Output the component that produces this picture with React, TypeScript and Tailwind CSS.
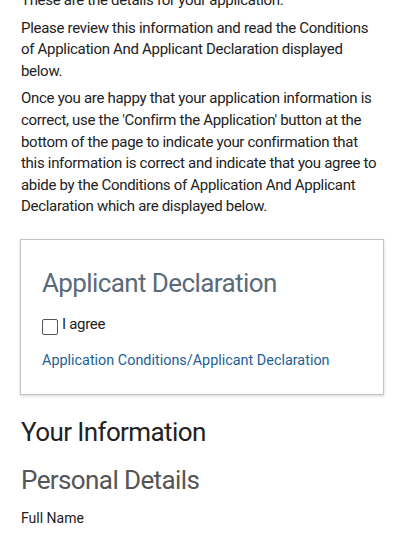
import React from "react";

export default function App() {
  return (
    <div
      className="min-h-[555px] w-[401px] overflow-hidden bg-white text-[#222222]"
      style={{ fontFamily: "Roboto, 'Liberation Sans', sans-serif" }}
    >
      <div className="mt-[-10px] px-[21px]">
        <p className="mb-[6px] text-[15px] leading-[21.6px] tracking-[-0.3px]">These are the details for your application.</p>
        <p className="mb-[6px] text-[15px] leading-[21.6px] tracking-[-0.3px]">
          Please review this information and read the Conditions of Application And Applicant Declaration displayed below.
        </p>
        <p className="text-[15px] leading-[21.6px] tracking-[-0.3px]">
          Once you are happy that your application information is correct, use the 'Confirm the Application' button at the bottom of the page to indicate your confirmation that this information is correct and indicate that you agree to abide by the Conditions of Application And Applicant Declaration which are displayed below.
        </p>

        <div className="mt-[21px] ml-[-1px] mr-[-4px] border border-[#c4c4c4] bg-white px-[21px] pt-[27px] pb-[23px] shadow-[0_1px_3px_rgba(0,0,0,0.18)]">
          <h2 className="text-[26px] leading-[32.4px] tracking-[-0.6px] text-[#5b6a79]">Applicant Declaration</h2>
          <label className="mt-[15px] flex items-center gap-[4px] text-[15px] leading-[21.6px] tracking-[-0.3px] text-[#222222]">
            <span className="mt-[3px] inline-block h-[16px] w-[16px] rounded-[2px] border border-[#555555] bg-white" />
            I agree
          </label>
          <a className="mt-[15px] block text-[14.4px] leading-[20px] text-[#1d5f96]">
            Application Conditions/Applicant Declaration
          </a>
        </div>

        <h2 className="mt-[21px] text-[26px] leading-[32.4px] tracking-[-0.6px] text-[#222222]">Your Information</h2>
        <h3 className="mt-[17px] text-[26px] leading-[31.2px] tracking-[-0.6px] text-[#555555]">Personal Details</h3>
        <div className="mt-[11px] text-[14px] leading-[20px] text-[#222222]">Full Name</div>
      </div>
    </div>
  );
}
